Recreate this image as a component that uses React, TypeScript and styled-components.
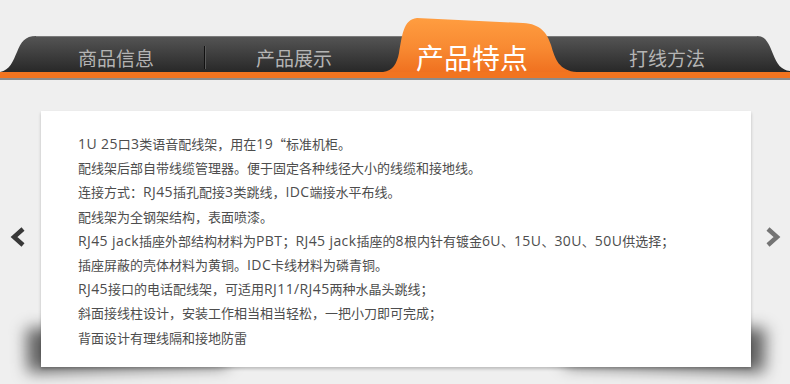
import React from "react";
import styled, { createGlobalStyle } from "styled-components";

const GlobalStyle = createGlobalStyle`
  html, body {
    margin: 0;
    padding: 0;
    background: #efefef;
  }
  body {
    font-family: "Noto Sans CJK SC", "Noto Sans", sans-serif;
  }
`;

const tabs = ["商品信息", "产品展示", "产品特点", "打线方法"];
const activeIndex = 2;

const lines = [
  "1U 25口3类语音配线架，用在19“标准机柜。",
  "配线架后部自带线缆管理器。便于固定各种线径大小的线缆和接地线。",
  "连接方式：RJ45插孔配接3类跳线，IDC端接水平布线。",
  "配线架为全钢架结构，表面喷漆。",
  "RJ45 jack插座外部结构材料为PBT；RJ45 jack插座的8根内针有镀金6U、15U、30U、50U供选择；",
  "插座屏蔽的壳体材料为黄铜。IDC卡线材料为磷青铜。",
  "RJ45接口的电话配线架，可适用RJ11/RJ45两种水晶头跳线；",
  "斜面接线柱设计，安装工作相当相当轻松，一把小刀即可完成；",
  "背面设计有理线隔和接地防雷",
];

// split a line into latin and CJK runs so latin can use its own face
const splitRuns = (text: string) => text.split(/([A-Za-z0-9/ ]+)/).filter(Boolean);

const App: React.FC = () => {
  return (
    <Page>
      <GlobalStyle />
      <TabStrip>
        <BarShape viewBox="0 0 790 36" preserveAspectRatio="none">
          <defs>
            <linearGradient id="barGrad" x1="0" y1="0" x2="0" y2="1">
              <stop offset="0" stopColor="#555555" />
              <stop offset="1" stopColor="#282828" />
            </linearGradient>
          </defs>
          <path
            d="M0,36 C10,34 13,25 17,16 C21,6 25,0 36,0 L757,0 C766,0 769,8 773,18 C777,28 781,34 790,35 L790,36 Z"
            fill="url(#barGrad)"
          />
          <path d="M36,0.5 L757,0.5" stroke="#7a7a7a" strokeWidth="1" fill="none" />
        </BarShape>
        {tabs.map((label, i) => (
          <Tab key={label} $active={i === activeIndex} $divider={i === 0}>
            {i === activeIndex && (
              <ActiveShape viewBox="0 0 194 55">
                <defs>
                  <linearGradient id="tabGrad" x1="0" y1="0" x2="0" y2="1">
                    <stop offset="0" stopColor="#ff9d40" />
                    <stop offset="0.55" stopColor="#f88a32" />
                    <stop offset="1" stopColor="#f07120" />
                  </linearGradient>
                </defs>
                <path
                  d="M0,55 C10,54 14,46 16,36 C19,20 20,2 34,1 L140,6 C158,7 164,16 168,28 C172,42 176,54 194,55 Z"
                  fill="url(#tabGrad)"
                />
              </ActiveShape>
            )}
            <TabLabel $active={i === activeIndex}>{label}</TabLabel>
          </Tab>
        ))}
      </TabStrip>
      <OrangeRule />
      <ContentRow>
        <ArrowSlot $side="left">
          <Chevron viewBox="0 0 18 20" $tone="#383838">
            <polyline points="14,2 5,10 14,18" />
          </Chevron>
        </ArrowSlot>
        <Card>
          {lines.map((line) => (
            <Line key={line}>
              {splitRuns(line).map((run, j) =>
                /[A-Za-z0-9]/.test(run) ? <Latin key={j}>{run}</Latin> : run
              )}
            </Line>
          ))}
        </Card>
        <ArrowSlot $side="right">
          <Chevron viewBox="0 0 18 20" $tone="#747474">
            <polyline points="4,2 13,10 4,18" />
          </Chevron>
        </ArrowSlot>
      </ContentRow>
    </Page>
  );
};

const Page = styled.div`
  width: 790px;
  height: 384px;
  overflow: hidden;
  padding-top: 17px;
  box-sizing: border-box;
  isolation: isolate;
`;

const TabStrip = styled.div`
  position: relative;
  height: 55px;
  display: grid;
  grid-template-columns: 178px 178px 178px 1fr;
  padding: 0 17px 0 27px;
`;

const BarShape = styled.svg`
  position: absolute;
  left: 0;
  top: 19px;
  width: 790px;
  height: 36px;
  z-index: 0;
`;

const Tab = styled.div<{ $active: boolean; $divider: boolean }>`
  position: relative;
  z-index: 1;
  display: flex;
  justify-content: center;
  align-self: end;
  height: ${(p) => (p.$active ? "55px" : "36px")};
  box-sizing: border-box;
  padding-top: ${(p) => (p.$active ? "25px" : "11px")};
  ${(p) =>
    p.$divider &&
    `
    &::after {
      content: "";
      position: absolute;
      right: 0;
      top: 10px;
      width: 1px;
      height: 23px;
      background: #111;
      box-shadow: 1px 0 0 #5a5a5a;
    }
  `}
`;

const ActiveShape = styled.svg`
  position: absolute;
  left: 0;
  top: 0;
  width: 194px;
  height: 55px;
  z-index: -1;
`;

const TabLabel = styled.span<{ $active: boolean }>`
  font-size: ${(p) => (p.$active ? "28px" : "19px")};
  line-height: ${(p) => (p.$active ? "30px" : "22px")};
  color: ${(p) => (p.$active ? "#ffffff" : "#b4b4b4")};
  white-space: nowrap;
`;

const OrangeRule = styled.div`
  height: 6px;
  background: #f27420;
  border-bottom: 2px solid #8c8c8c;
`;

const ContentRow = styled.div`
  display: flex;
  align-items: center;
  margin-top: 31px;
`;

const ArrowSlot = styled.div<{ $side: "left" | "right" }>`
  width: ${(p) => (p.$side === "left" ? "41px" : "39px")};
  display: flex;
  padding-left: ${(p) => (p.$side === "left" ? "9px" : "13px")};
  box-sizing: border-box;
  margin-top: -4px;
`;

const Chevron = styled.svg<{ $tone: string }>`
  width: 18px;
  height: 20px;
  fill: none;
  stroke: ${(p) => p.$tone};
  stroke-width: 4.5;
  stroke-linecap: butt;
  stroke-linejoin: miter;
`;

const Card = styled.div`
  position: relative;
  width: 710px;
  height: 256px;
  box-sizing: border-box;
  padding: 21px 0 0 37px;
  background: #ffffff;
  box-shadow: 0 2px 3px rgba(0, 0, 0, 0.22);

  &::before,
  &::after {
    content: "";
    position: absolute;
    z-index: -1;
    bottom: -2px;
    width: 200px;
    height: 44px;
    background: rgba(0, 0, 0, 0.6);
    filter: blur(8px);
  }
  &::before {
    left: -14px;
    transform: rotate(-2deg);
  }
  &::after {
    right: -14px;
    transform: rotate(2deg);
  }
`;

const Line = styled.div`
  font-size: 13px;
  line-height: 24.2px;
  height: 24.2px;
  color: #4d4d4d;
  white-space: nowrap;
`;

const Latin = styled.span`
  font-family: "Open Sans", sans-serif;
  font-size: 14px;
  letter-spacing: 0.4px;
`;

export default App;
